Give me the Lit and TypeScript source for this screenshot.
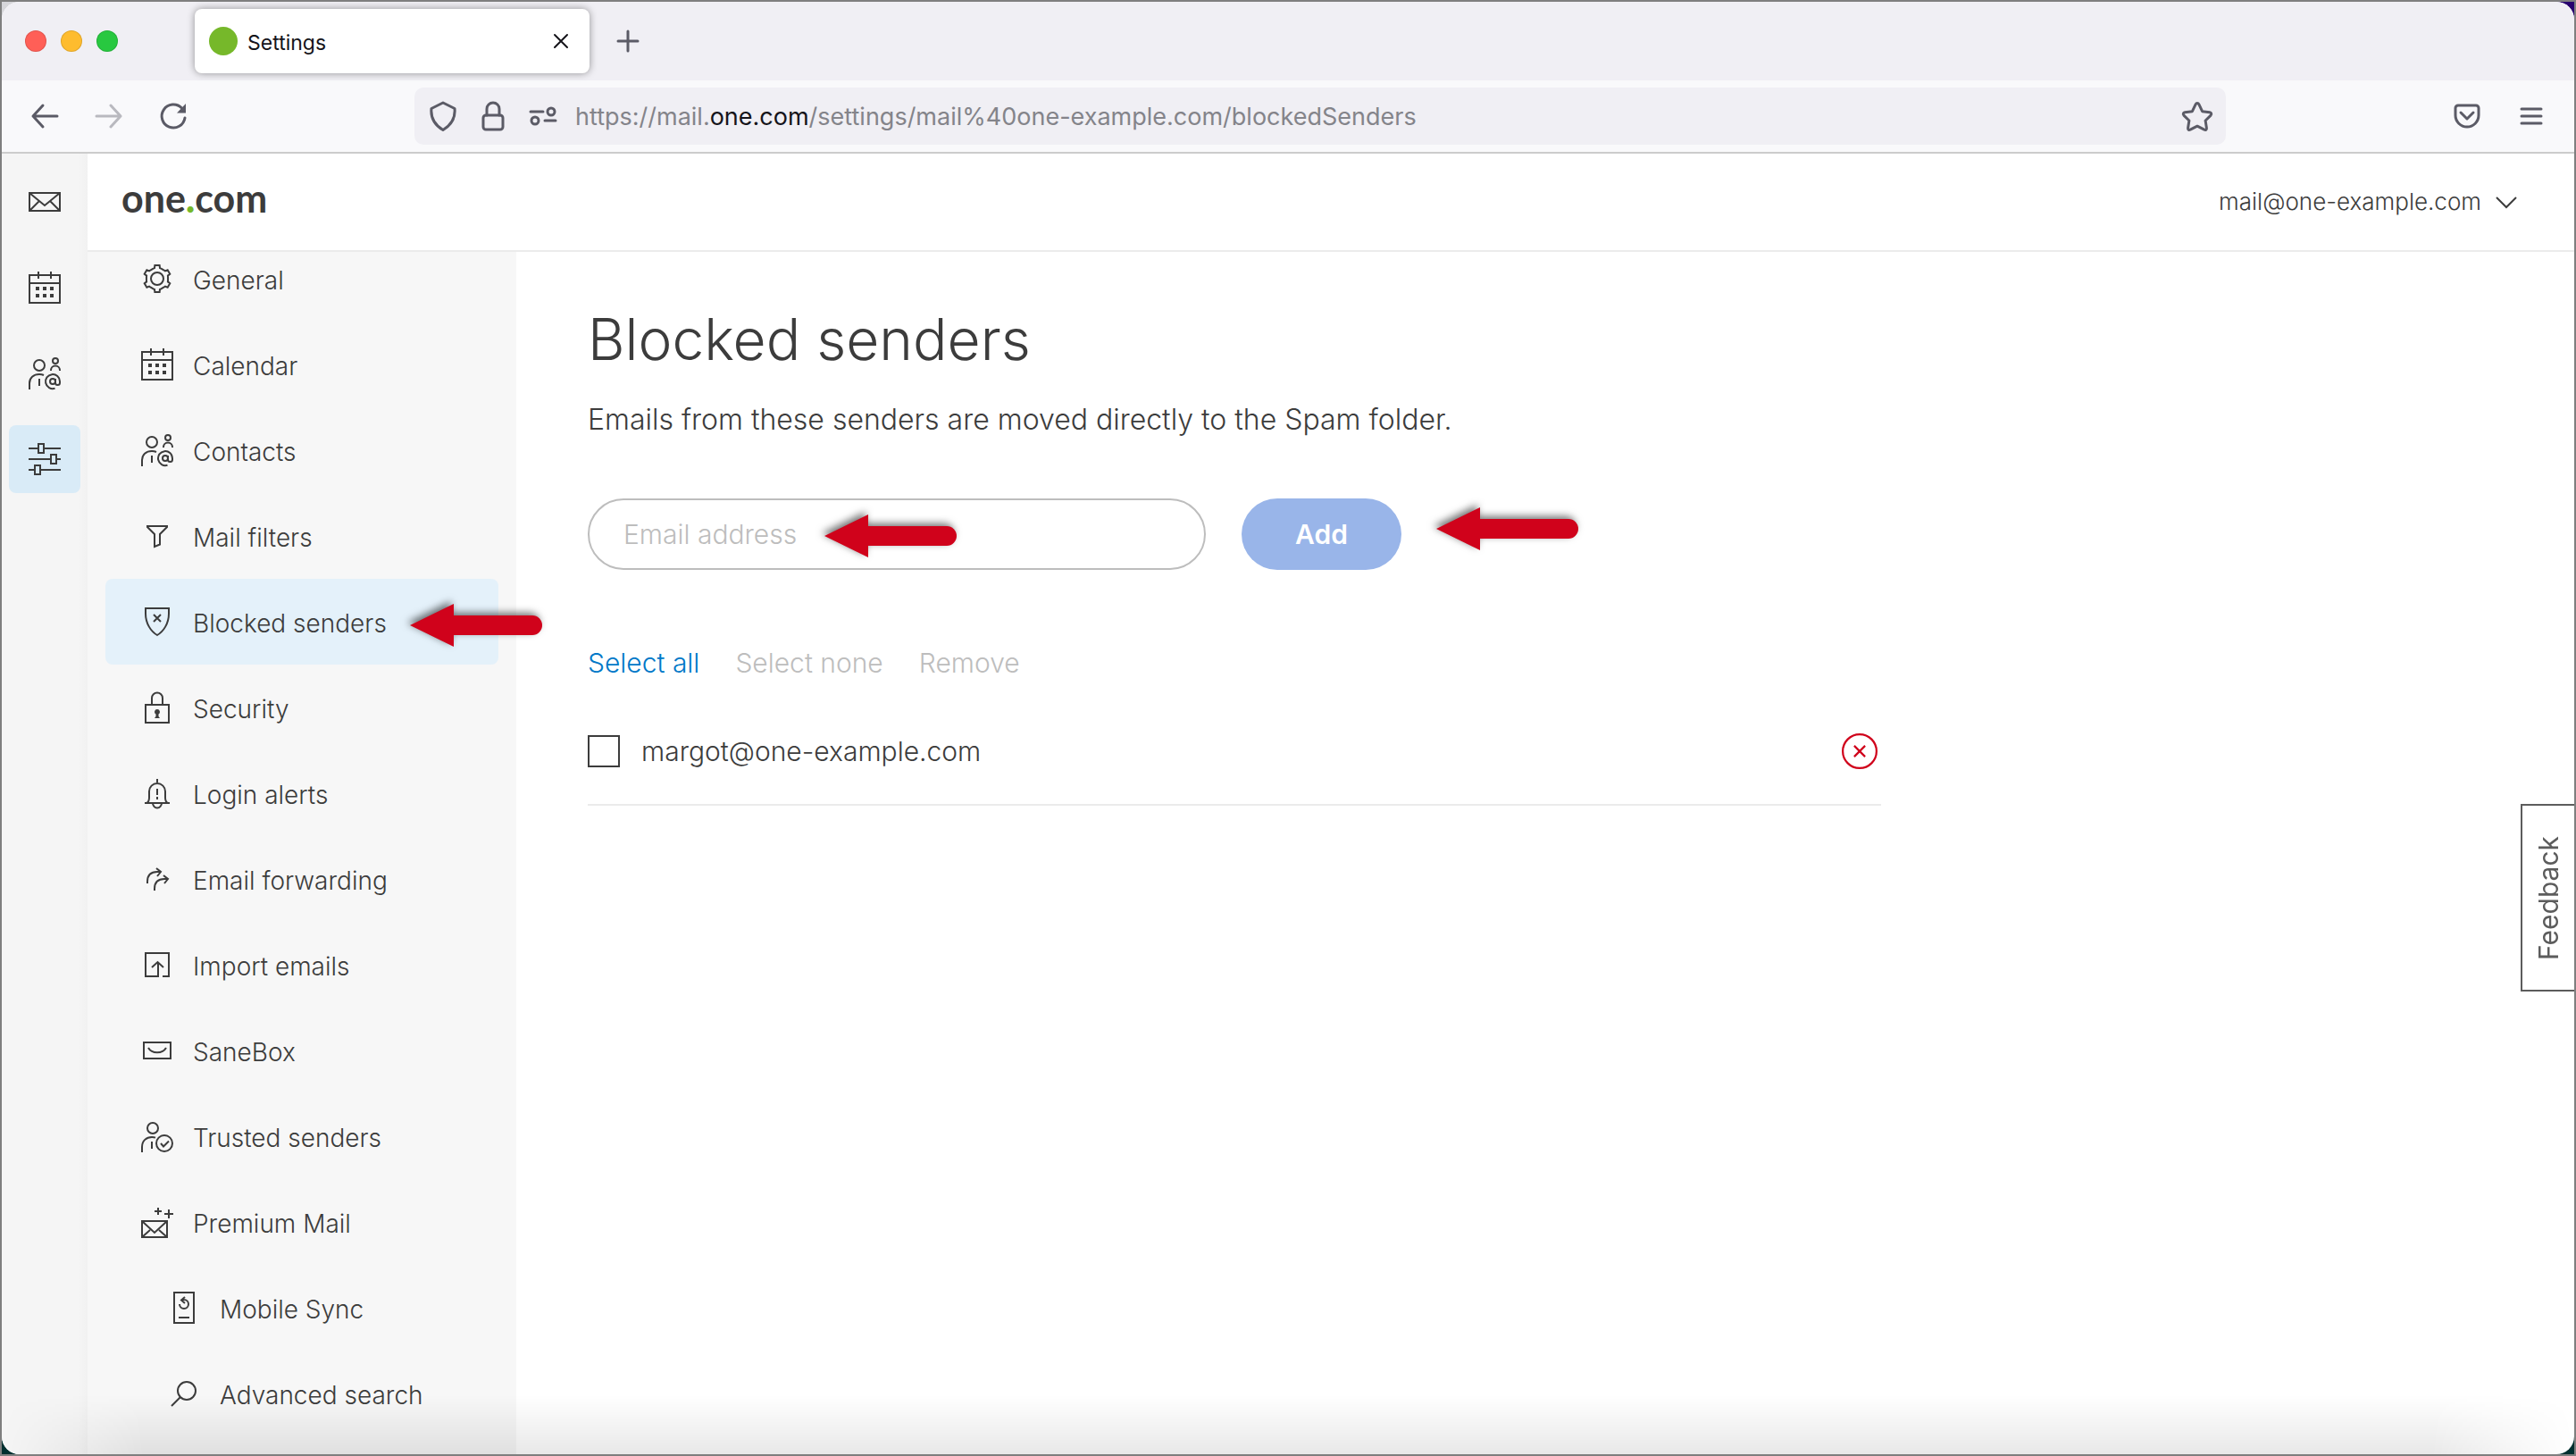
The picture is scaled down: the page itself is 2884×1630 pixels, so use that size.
import { LitElement, html, svg, css, type SVGTemplateResult } from "lit";
import { customElement, property, state } from "lit/decorators.js";
import { classMap } from "lit/directives/class-map.js";

/** Outline of a six-toothed gear centred in a 36px box. */
const gearOutline = (() => {
  const points: string[] = [];
  const at = (radius: number, degrees: number) => {
    const a = (degrees * Math.PI) / 180;
    points.push(`${(18 + radius * Math.cos(a)).toFixed(2)},${(18 + radius * Math.sin(a)).toFixed(2)}`);
  };
  for (let k = 0; k < 6; k++) {
    const mid = -90 + k * 60;
    at(12.2, mid - 21);
    at(12.4, mid - 14);
    at(15.2, mid - 10);
    at(15.2, mid + 10);
    at(12.4, mid + 14);
    at(12.2, mid + 21);
  }
  return points.join(" ");
})();

/** Line icons on a 36px grid. */
const icons: Record<string, SVGTemplateResult> = {
  mail: svg`<path d="M1 8h34v20H1zM1 8l17 14L35 8M1 28l11-11M35 28L24 17"/>`,
  calendar: svg`<path d="M1 4h34v31H1zM1 13h34M11 0v8M25 0v8"/>
    <path class="solid" d="M8 17h4v4H8zM16 17h4v4h-4zM24 17h4v4h-4zM8 25h4v4H8zM16 25h4v4h-4zM24 25h4v4h-4z"/>`,
  contacts: svg`<circle cx="12" cy="9" r="6"/><circle cx="30" cy="4" r="3"/>
    <path d="M25 15v-.5a5 5 0 0 1 10 0v.5M1 36v-7C1 23 5.500 19 12 19c2 0 3.500.3 5 1M12 24v8"/>
    <circle cx="27" cy="27" r="3"/>
    <path d="M29.500 34.700A8 8 0 1 1 35 27v1.500a2.500 2.500 0 0 1-5 0V24"/>`,
  sliders: svg`<path d="M0 6h11M18 6h18M0 18h24M31 18h5M0 30h6M13 30h23M11 1h6v10h-6zM25 13h6v10h-6zM7 25h6v10H7z"/>`,
  gear: svg`<polygon points=${gearOutline}/><circle cx="18" cy="18" r="7"/>`,
  filter: svg`<path d="M7 7h22v1l-8 8v11.500L15 30V16L7 8z"/>`,
  blocked: svg`<path d="M5 3h26v6c0 11-6 20-13 24C11 29 5 20 5 9zM14 10l8 8M22 10l-8 8"/>`,
  lock: svg`<path d="M5 15h26v20H5zM12 15V7.500a6 6 0 0 1 12 0V15"/>
    <path class="solid" d="M18 20a3 3 0 0 0-1.500 5.600V28L15 30h6l-1.500-2v-2.400A3 3 0 0 0 18 20z"/>`,
  bell: svg`<path d="M18 2v4M4 29h28M6 29c2.500-1 3-3 3-6v-7a9 9 0 0 1 18 0v7c0 3 .5 5 3 6M13 29a5 5.500 0 0 0 10 0M18 13v7M18 22v3"/>`,
  forward: svg`<path d="M7 23v-2c0-7 4-11 11-11h3M17 6l5 4-4 5M15 31v-2c0-7 4-11 11-11h3M25 14l5 4-4 5"/>`,
  import: svg`<path d="M19 15v16H5V5h26v26h-7M12 21l6.500-6 6.500 6"/>`,
  sanebox: svg`<path d="M3 9h30v18H3zM8 15c4 7 16 7 20 0"/>`,
  trusted: svg`<circle cx="13" cy="9" r="6"/><path d="M1 36v-6c0-7 5-11 11-11 1.500 0 2.500 0 4 .6M12 24v8M22 26l3 3.500 6-6"/><circle cx="26" cy="26" r="9"/>`,
  premium: svg`<path d="M1 17h28v18H1zM1 17l14 13 14-13M1 35l9-8M29 35l-9-8M15 6h8M19 2v8M26 9h10M31 4v10"/>`,
  mobile: svg`<path d="M7 1h22v34H7zM12 29h12M13 14a5 5 0 1 0 5-5h-3M19 6l-4 3.500 4 3.500"/>`,
  search: svg`<circle cx="21" cy="15" r="10"/><path d="M14 22L4 32"/>`,
  chevron: svg`<path d="M7 13l11 11 11-11"/>`,
  remove: svg`<circle cx="18" cy="18" r="17"/><path d="M12.500 12.500l11 11M23.500 12.500l-11 11"/>`,
  // Browser chrome
  back: svg`<path d="M32 18H5M16 6L5 18l11 12"/>`,
  next: svg`<path d="M4 18h27M20 6l11 12-11 12"/>`,
  reload: svg`<path d="M31 20a13 13 0 1 1-3.500-11"/><path class="solid" d="M32 4v10.500H22z"/>`,
  shield: svg`<path d="M18 3l13 6.500c1 10-3 18-13 24C8 27.500 4 19.500 5 9.500z"/>`,
  padlock: svg`<rect x="7" y="17" width="22" height="16" rx="3"/><path d="M11 17V10a7 7 0 0 1 14 0v7"/>`,
  permissions: svg`<path d="M4 13h14M20 23h12"/><circle cx="27" cy="13" r="4"/><circle cx="9" cy="23" r="4"/>`,
  star: svg`<path d="M18 3.500c.9 0 1.500.5 1.900 1.300l3.700 7.900 8.300 1.100c1.800.3 2.400 2 1.200 3.300l-6 5.900 1.300 8.300c.3 1.800-1 2.600-2.600 1.900L18 29.200l-7.800 4c-1.600.7-2.900-.1-2.600-1.900L8.900 23l-6-5.900c-1.200-1.300-.6-3 1.200-3.300l8.300-1.100 3.700-7.900c.4-.8 1-1.300 1.900-1.300z"/>`,
  pocket: svg`<path d="M8 6h20a3 3 0 0 1 3 3v8a13 13 0 0 1-26 0V9a3 3 0 0 1 3-3zM11 14l7 7 7-7"/>`,
  menu: svg`<path d="M7 10h22M7 18h22M7 26h22"/>`,
  close: svg`<path d="M11 11l14 14M25 11L11 25"/>`,
  plus: svg`<path d="M18 7v22M7 18h22"/>`,
};

@customElement("line-icon")
export class LineIcon extends LitElement {
  @property() name = "";

  static styles = css`
    :host { display: block; flex: none; width: 36px; height: 36px; }
    .glyph {
      display: block; width: 100%; height: 100%; overflow: visible;
      fill: none; stroke: currentColor; stroke-width: var(--icon-stroke, 2);
      stroke-linecap: var(--icon-cap, butt);
      stroke-linejoin: var(--icon-join, miter);
    }
    .solid { fill: currentColor; stroke: none; }
  `;

  render() {
    return html`<svg class="glyph" viewBox="0 0 36 36" aria-hidden="true">${icons[this.name]}</svg>`;
  }
}

@customElement("pointer-arrow")
export class PointerArrow extends LitElement {
  static styles = css`
    :host {
      display: flex; align-items: center; width: 148px; height: 48px; pointer-events: none;
      filter: drop-shadow(-3px -3px 4px rgba(0, 0, 0, 0.55));
    }
    .head { flex: none; width: 49px; height: 48px; background: #d0021b; clip-path: polygon(0 50%, 100% 0, 100% 100%); }
    .shaft { flex: 1; height: 22px; margin-left: -1px; background: #d0021b; border-radius: 0 11px 11px 0; }
  `;

  render() {
    return html`<div class="head"></div><div class="shaft"></div>`;
  }
}

@customElement("browser-chrome")
export class BrowserChrome extends LitElement {
  static styles = css`
    :host {
      display: block; color: #5b5b66; font-family: Inter, "Liberation Sans", sans-serif; font-weight: 400;
      --icon-cap: round; --icon-join: round; --icon-stroke: 3;
    }
    button { display: flex; padding: 0; border: 0; background: none; color: inherit; font: inherit; }
    .tabs { display: flex; align-items: center; height: 88px; padding-left: 26px; background: #f0eff4; }
    .lights { display: flex; gap: 16px; margin-right: 86px; }
    .light { width: 24px; height: 24px; border-radius: 50%; box-shadow: inset 0 0 0 1px rgba(0, 0, 0, 0.12); }
    .red { background: #ff5f57; }
    .amber { background: #febc2e; }
    .green { background: #28c840; }
    .tab {
      display: flex; align-items: center; box-sizing: border-box; width: 442px; height: 72px; padding: 0 14px 0 16px;
      border-radius: 8px; background: #fff; box-shadow: 0 0 8px rgba(0, 0, 0, 0.4); color: #15141a;
    }
    .favicon { width: 32px; height: 32px; margin-right: 11px; border-radius: 50%; background: #76b82a; }
    .tab-title { flex: 1; font-size: 23px; line-height: 32px; padding-top: 4px; }
    .tab-close { --icon-stroke: 2; }
    .new-tab { margin-left: 25px; }
    .toolbar { display: flex; align-items: center; height: 80px; padding: 0 30px; background: #f9f9fb; border-bottom: 2px solid #ccc; }
    .nav { display: flex; gap: 36px; }
    .disabled { opacity: 0.4; }
    .address {
      display: flex; align-items: center; flex: 1; height: 64px; margin: 0 252px; padding: 0 14px;
      border-radius: 10px; background: #f0eff4;
    }
    .badges { display: flex; gap: 20px; margin-right: 18px; }
    .url { flex: 1; font-size: 27px; line-height: 40px; padding-top: 2px; color: #84848a; white-space: nowrap; }
    .host { color: #15141a; }
    .tools { display: flex; gap: 36px; }
  `;

  render() {
    return html`
      <div class="tabs">
        <div class="lights"><span class="light red"></span><span class="light amber"></span><span class="light green"></span></div>
        <div class="tab">
          <span class="favicon"></span>
          <span class="tab-title">Settings</span>
          <button class="tab-close" aria-label="Close tab"><line-icon name="close"></line-icon></button>
        </div>
        <button class="new-tab" aria-label="New tab"><line-icon name="plus"></line-icon></button>
      </div>
      <div class="toolbar">
        <div class="nav">
          <button aria-label="Back"><line-icon name="back"></line-icon></button>
          <button class="disabled" aria-label="Forward" disabled><line-icon name="next"></line-icon></button>
          <button aria-label="Reload"><line-icon name="reload"></line-icon></button>
        </div>
        <div class="address">
          <div class="badges">
            <line-icon name="shield"></line-icon>
            <line-icon name="padlock"></line-icon>
            <line-icon name="permissions"></line-icon>
          </div>
          <div class="url">https://mail.<span class="host">one.com</span>/settings/mail%40one-example.com/blockedSenders</div>
          <button aria-label="Bookmark this page"><line-icon name="star"></line-icon></button>
        </div>
        <div class="tools">
          <button aria-label="Save to Pocket"><line-icon name="pocket"></line-icon></button>
          <button aria-label="Open application menu"><line-icon name="menu"></line-icon></button>
        </div>
      </div>
    `;
  }
}

interface NavEntry { icon: string; label: string; sub?: boolean; }

const entries: NavEntry[] = [
  { icon: "gear", label: "General" },
  { icon: "calendar", label: "Calendar" },
  { icon: "contacts", label: "Contacts" },
  { icon: "filter", label: "Mail filters" },
  { icon: "blocked", label: "Blocked senders" },
  { icon: "lock", label: "Security" },
  { icon: "bell", label: "Login alerts" },
  { icon: "forward", label: "Email forwarding" },
  { icon: "import", label: "Import emails" },
  { icon: "sanebox", label: "SaneBox" },
  { icon: "trusted", label: "Trusted senders" },
  { icon: "premium", label: "Premium Mail" },
  { icon: "mobile", label: "Mobile Sync", sub: true },
  { icon: "search", label: "Advanced search", sub: true },
];

const apps = [
  { icon: "mail", label: "Mail" },
  { icon: "calendar", label: "Calendar" },
  { icon: "contacts", label: "Contacts" },
  { icon: "sliders", label: "Settings" },
];

@customElement("app-root")
export class AppRoot extends LitElement {
  @state() private senders = ["margot@one-example.com"];
  @state() private selected = new Set<string>();

  static styles = css`
    :host {
      display: block; box-sizing: border-box; min-height: 100vh; padding: 2px; background: #7f7f7f;
      color: #3c3c3c; font-family: Inter, "Liberation Sans", sans-serif; font-size: 30px; font-weight: 300;
      line-height: 40px;
    }
    button { padding: 0; border: 0; background: none; color: inherit; font: inherit; }
    a { color: inherit; text-decoration: none; }
    .desktop {
      display: flex; min-height: calc(100vh - 4px);
      background:
        linear-gradient(#d6d6da, #d6d6da) 0 0 / 40px 40px no-repeat,
        linear-gradient(#28006e, #28006e) 100% 0 / 40px 40px no-repeat,
        #003030;
    }
    .window { position: relative; display: flex; flex-direction: column; flex: 1; min-width: 0; overflow: hidden; border-radius: 20px; background: #fff; }
    .app { display: grid; grid-template-columns: 96px 1fr; flex: 1; }
    .rail {
      display: flex; flex-direction: column; align-items: center; gap: 20px; padding-top: 16px;
      background: linear-gradient(to right, #f5f5f5 90%, #f1f1f1);
    }
    .rail-link { display: flex; align-items: center; justify-content: center; width: 80px; height: 76px; border-radius: 8px; }
    .rail-link.active { background: #d9ebf7; }
    .page { display: grid; grid-template-rows: auto 1fr; min-width: 0; }
    .header {
      position: relative; z-index: 1; display: flex; align-items: center; justify-content: space-between;
      height: 108px; padding: 0 58px 0 38px; background: #fff; border-bottom: 2px solid #ebebeb;
    }
    .logo { font-family: Lato, "Liberation Sans", sans-serif; font-size: 43px; font-weight: 700; line-height: 48px; padding-bottom: 8px; }
    .dot { color: #76b82a; font-weight: 900; }
    .account { display: flex; align-items: center; gap: 10px; font-size: 26px; }
    .body { display: grid; grid-template-columns: 480px 1fr; min-width: 0; }
    .side { position: relative; z-index: 0; background: #f7f7f7; }
    .menu { margin: -18px 20px 0; padding: 0; list-style: none; }
    .entry { position: relative; }
    .link { display: flex; align-items: center; gap: 22px; height: 96px; padding-left: 40px; border-radius: 8px; font-size: 28px; }
    .link-text { padding-top: 3px; }
    .link.active { background: #e4f1fa; }
    .link.sub { padding-left: 70px; }
    .main { padding: 58px 80px 80px; min-width: 0; }
    .title { margin: 0 0 30px; font-size: 64px; font-weight: 300; line-height: 80px; }
    .intro { margin: 0 0 68px; font-size: 32px; }
    .add-form { display: flex; gap: 40px; margin-bottom: 84px; }
    .field {
      box-sizing: border-box; width: 692px; height: 80px; padding: 0 38px; border: 2px solid #bdbdbd; border-radius: 40px;
      background: #fff; color: inherit; font: inherit; outline: none;
    }
    .field::placeholder { color: #bdbdbd; opacity: 1; }
    .add { width: 179px; height: 80px; border-radius: 40px; background: #99b5e9; color: #fff; font-weight: 600; }
    .list-area { max-width: 1448px; }
    .actions { display: flex; gap: 40px; margin-bottom: 20px; }
    .action { color: #bdbdbd; }
    .action.enabled { color: #0078c8; }
    .senders { margin: 0; padding: 0; list-style: none; }
    .sender { display: flex; align-items: center; justify-content: space-between; height: 118px; padding-right: 4px; border-bottom: 2px solid #ebebeb; }
    .pick { display: flex; align-items: center; gap: 24px; }
    .check { appearance: none; box-sizing: border-box; width: 36px; height: 36px; margin: 0; border: 2px solid #3c3c3c; background: #fff; }
    .check:checked { background: #3c3c3c; }
    .remove { color: #d0021b; }
    .remove line-icon { width: 40px; height: 40px; }
    .feedback {
      position: absolute; right: 0; top: 898px; z-index: 2; box-sizing: border-box; width: 60px; height: 210px;
      border: 2px solid #5c5c5c; border-right: 0; background: #fff; color: #5c5c5c;
    }
    .feedback-text { display: block; margin: auto; writing-mode: vertical-rl; transform: rotate(180deg); font-weight: 400; }
    .fade {
      position: absolute; inset: auto 0 0 0; z-index: 2; height: 66px; pointer-events: none;
      background: linear-gradient(to bottom, transparent, rgba(0, 0, 0, 0.09));
      mask-image: linear-gradient(to right, transparent, #000 160px, #000 calc(100% - 160px), transparent);
    }
    .arrow-menu, .arrow-field, .arrow-add { position: absolute; z-index: 3; }
    .arrow-menu { left: 341px; top: 28px; }
    .field-wrap, .add-wrap { position: relative; display: flex; }
    .arrow-field { left: 265px; top: 18px; }
    .arrow-add { left: 218px; top: 10px; width: 159px; }
  `;

  private toggle(sender: string) {
    const next = new Set(this.selected);
    if (!next.delete(sender)) next.add(sender);
    this.selected = next;
  }

  private removeSender(sender: string) {
    this.senders = this.senders.filter((s) => s !== sender);
  }

  render() {
    return html`
      <div class="desktop">
        <div class="window">
          <browser-chrome></browser-chrome>
          <div class="app">
            <nav class="rail" aria-label="Apps">
              ${apps.map((app) => html`
                <a href="#" class=${classMap({ "rail-link": true, active: app.icon === "sliders" })} aria-label=${app.label}>
                  <line-icon name=${app.icon}></line-icon>
                </a>`)}
            </nav>
            <div class="page">
              <header class="header">
                <a class="logo" href="#">one<span class="dot">.</span>com</a>
                <button class="account">mail@one-example.com <line-icon name="chevron"></line-icon></button>
              </header>
              <div class="body">
                <nav class="side" aria-label="Settings">
                  <ul class="menu">${entries.map((entry) => this.renderEntry(entry))}</ul>
                </nav>
                <main class="main">
                  <h1 class="title">Blocked senders</h1>
                  <p class="intro">Emails from these senders are moved directly to the Spam folder.</p>
                  <form class="add-form" @submit=${(e: Event) => e.preventDefault()}>
                    <div class="field-wrap">
                      <input class="field" type="email" placeholder="Email address" aria-label="Email address" />
                      <pointer-arrow class="arrow-field"></pointer-arrow>
                    </div>
                    <div class="add-wrap">
                      <button class="add" type="submit">Add</button>
                      <pointer-arrow class="arrow-add"></pointer-arrow>
                    </div>
                  </form>
                  <div class="list-area">
                    <div class="actions">
                      <button class="action enabled" @click=${() => (this.selected = new Set(this.senders))}>Select all</button>
                      <button class="action" @click=${() => (this.selected = new Set())}>Select none</button>
                      <button class="action">Remove</button>
                    </div>
                    <ul class="senders">
                      ${this.senders.map((sender) => html`
                        <li class="sender">
                          <label class="pick">
                            <input class="check" type="checkbox" .checked=${this.selected.has(sender)} @change=${() => this.toggle(sender)} />
                            ${sender}
                          </label>
                          <button class="remove" aria-label="Remove ${sender}" @click=${() => this.removeSender(sender)}>
                            <line-icon name="remove"></line-icon>
                          </button>
                        </li>`)}
                    </ul>
                  </div>
                </main>
              </div>
            </div>
          </div>
          <button class="feedback"><span class="feedback-text">Feedback</span></button>
          <div class="fade"></div>
        </div>
      </div>
    `;
  }

  private renderEntry(entry: NavEntry) {
    const active = entry.label === "Blocked senders";
    return html`
      <li class="entry">
        <a href="#" class=${classMap({ link: true, active, sub: !!entry.sub })}>
          <line-icon name=${entry.icon}></line-icon><span class="link-text">${entry.label}</span>
        </a>
        ${active ? html`<pointer-arrow class="arrow-menu"></pointer-arrow>` : ""}
      </li>
    `;
  }
}
